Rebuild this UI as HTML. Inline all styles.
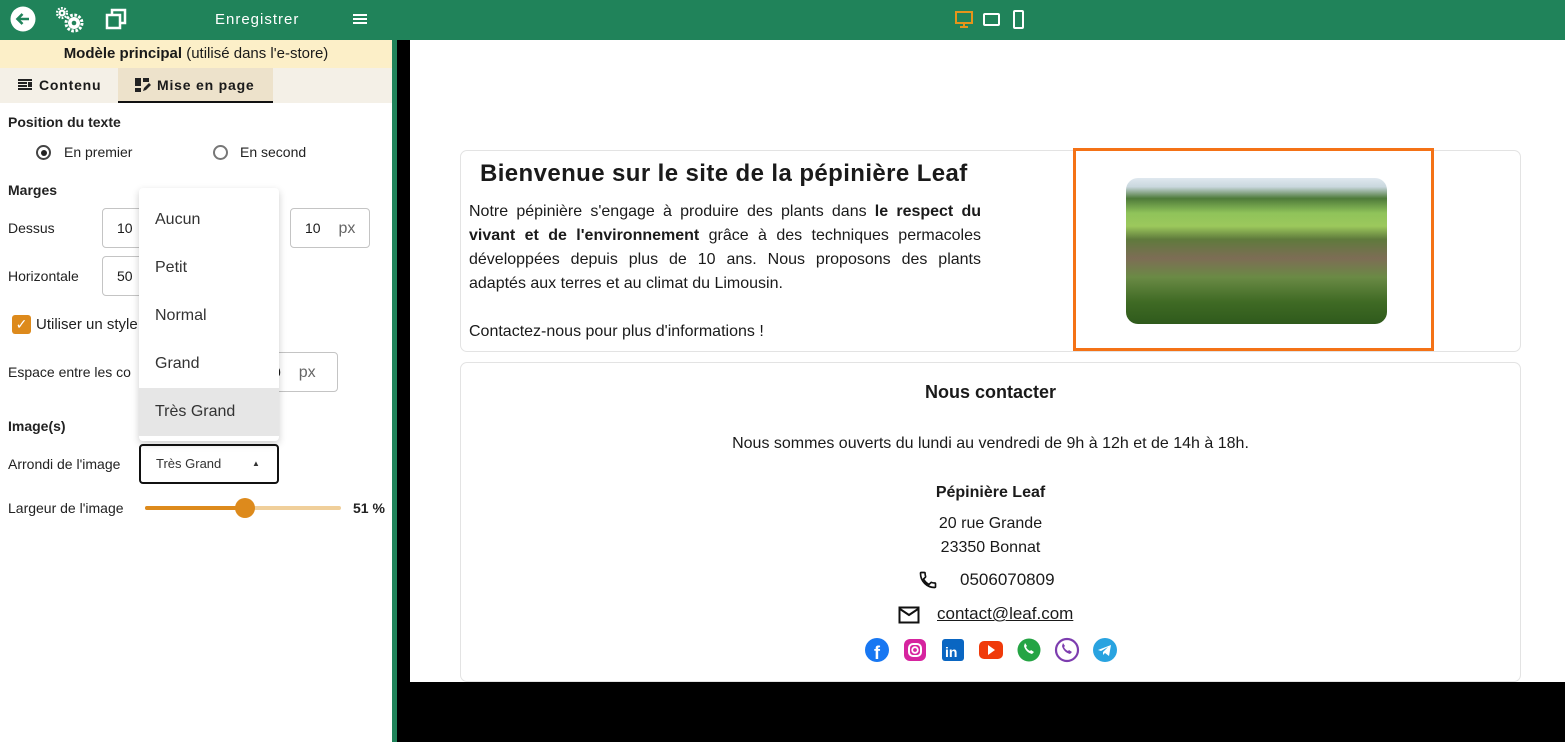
<!DOCTYPE html>
<html><head><meta charset="utf-8"><style>
*{box-sizing:border-box;margin:0;padding:0}
body{width:1565px;height:742px;overflow:hidden;font-family:"Liberation Sans",sans-serif;color:#1a1a1a;background:#000;position:relative}
.abs{position:absolute}
.top{left:0;top:0;width:1565px;height:40px;background:#20835a}
.left{left:0;top:40px;width:392px;height:702px;background:#fff}
.strip{left:392px;top:40px;width:5px;height:702px;background:#20835a}
.prev{left:410px;top:40px;width:1155px;height:642px;background:#fff}
.lbl{font-size:14px;color:#222}
.b{font-weight:bold}
.inp{border:1px solid #c4c4c4;border-radius:4px;background:#fff;font-size:14px;padding-left:14px;line-height:38px;height:40px}
.card{border:1px solid #e3e3e3;border-radius:7px;background:#fff}
.p{font-size:16px;line-height:24px}
.menu div{height:48px;line-height:48px;padding-left:16px;font-size:16px;color:#333}
</style></head><body>
<div class="abs top"></div>
<svg class="abs" style="left:10px;top:6px" width="26" height="26" viewBox="0 0 26 26"><circle cx="13" cy="13" r="12.5" fill="#fff"/><path d="M19 13H8M12.5 8L7.5 13l5 5" stroke="#20835a" stroke-width="2.6" fill="none"/></svg>
<svg class="abs" style="left:55px;top:7px" width="30" height="26" viewBox="0 0 30 26"><circle cx="7" cy="6" r="3.5" fill="#fff"/><circle cx="7" cy="6" r="5" fill="none" stroke="#fff" stroke-width="2.2" stroke-dasharray="1.8 1.4"/><circle cx="7" cy="6" r="1.3" fill="#20835a"/><circle cx="19" cy="16" r="6" fill="#fff"/><circle cx="19" cy="16" r="8" fill="none" stroke="#fff" stroke-width="3" stroke-dasharray="2.6 1.6"/><circle cx="19" cy="16" r="2.3" fill="#20835a"/></svg>
<svg class="abs" style="left:105px;top:8px" width="22" height="22" viewBox="0 0 22 22"><rect x="7" y="2" width="13" height="13" fill="none" stroke="#fff" stroke-width="2.5"/><rect x="2" y="7" width="13" height="13" fill="#20835a" stroke="#fff" stroke-width="2.5"/></svg>
<div class="abs" style="left:215px;top:11px;color:#fff;font-size:15px;letter-spacing:1px">Enregistrer</div>
<div class="abs" style="left:353px;top:14px;width:14px;height:2px;background:#fff;box-shadow:0 4px 0 #fff,0 8px 0 #fff"></div>
<svg class="abs" style="left:954px;top:11px" width="20" height="18" viewBox="0 0 20 18"><rect x="2" y="1" width="16" height="11" fill="none" stroke="#e6941a" stroke-width="2"/><path d="M10 12v3M6 16h8" stroke="#e6941a" stroke-width="2"/></svg>
<div class="abs" style="left:983px;top:13px;width:17px;height:13px;border:2.5px solid #fff;border-radius:2px"></div>
<div class="abs" style="left:1013px;top:10px;width:11px;height:19px;border:2.5px solid #fff;border-radius:2px"></div>

<div class="abs left"></div>
<div class="abs" style="left:0;top:40px;width:392px;height:28px;background:#fcefc8;text-align:center;font-size:15px;line-height:28px"><b>Modèle principal</b> (utilisé dans l'e-store)</div>
<div class="abs" style="left:0;top:68px;width:392px;height:35px;background:#f4f0e7"></div>
<div class="abs" style="left:118px;top:68px;width:155px;height:35px;background:#ede2cb;border-bottom:2px solid #111"></div>
<svg class="abs" style="left:17px;top:78px" width="16" height="14" viewBox="0 0 16 14"><path d="M1 2h14M1 5h9M1 8h9M1 11h14" stroke="#222" stroke-width="2"/><rect x="11" y="4" width="4" height="5" fill="#222"/></svg>
<div class="abs b" style="left:39px;top:77px;font-size:14px;letter-spacing:.8px">Contenu</div>
<svg class="abs" style="left:134px;top:77px" width="18" height="16" viewBox="0 0 18 16"><rect x="1" y="1" width="6" height="8" fill="#222"/><rect x="9" y="1" width="6" height="4" fill="#222"/><rect x="1" y="11" width="6" height="4" fill="#222"/><path d="M9 14l1-3 5-5 2 2-5 5z" fill="#222"/></svg>
<div class="abs b" style="left:157px;top:77px;font-size:14px;letter-spacing:.8px">Mise en page</div>
<div class="abs lbl b" style="left:8px;top:114px">Position du texte</div>
<div class="abs" style="left:36px;top:145px;width:15px;height:15px;border:2px solid #444;border-radius:50%"><div style="margin:2.5px;width:6px;height:6px;border-radius:50%;background:#222"></div></div>
<div class="abs lbl" style="left:64px;top:144px">En premier</div>
<div class="abs" style="left:213px;top:145px;width:15px;height:15px;border:2px solid #777;border-radius:50%"></div>
<div class="abs lbl" style="left:240px;top:144px">En second</div>
<div class="abs lbl b" style="left:8px;top:182px">Marges</div>
<div class="abs lbl" style="left:8px;top:220px">Dessus</div>
<div class="abs inp" style="left:102px;top:208px;width:50px">10</div>
<div class="abs inp" style="left:290px;top:208px;width:80px">10 <span style="color:#666;font-size:16px;margin-left:14px">px</span></div>
<div class="abs lbl" style="left:8px;top:268px">Horizontale</div>
<div class="abs inp" style="left:102px;top:256px;width:50px">50</div>
<div class="abs" style="left:12px;top:315px;width:19px;height:19px;background:#dd8a1c;border-radius:3px;color:#fff;font-size:14px;text-align:center;line-height:19px">✓</div>
<div class="abs lbl" style="left:36px;top:316px;font-size:15px">Utiliser un style</div>
<div class="abs lbl" style="left:8px;top:364px">Espace entre les co</div>
<div class="abs inp" style="left:258px;top:352px;width:80px">0 <span style="color:#666;font-size:16px;margin-left:14px">px</span></div>
<div class="abs lbl b" style="left:8px;top:418px">Image(s)</div>
<div class="abs lbl" style="left:8px;top:456px">Arrondi de l'image</div>
<div class="abs" style="left:139px;top:444px;width:140px;height:40px;border:2px solid #111;border-radius:4px;font-size:13px;line-height:36px;padding-left:15px;color:#333">Très Grand<span style="position:absolute;left:111px;font-size:8px">▲</span></div>
<div class="abs lbl" style="left:8px;top:500px">Largeur de l'image</div>
<div class="abs" style="left:145px;top:506px;width:196px;height:4px;background:#f0cf9a;border-radius:2px"></div>
<div class="abs" style="left:145px;top:506px;width:100px;height:4px;background:#dd8a1c;border-radius:2px"></div>
<div class="abs" style="left:235px;top:498px;width:20px;height:20px;background:#dd8a1c;border-radius:50%"></div>
<div class="abs lbl b" style="left:353px;top:500px">51 %</div>
<div class="abs menu" style="left:139px;top:188px;width:140px;height:253px;background:#fff;border-radius:4px;box-shadow:0 3px 8px rgba(0,0,0,.2);padding-top:8px">
<div>Aucun</div><div>Petit</div><div>Normal</div><div>Grand</div><div style="background:#e6e6e6">Très Grand</div></div>

<div class="abs strip"></div>
<div class="abs prev"></div>
<div class="abs card" style="left:460px;top:150px;width:1061px;height:202px"></div>
<div class="abs b" style="left:480px;top:160px;font-size:24px;letter-spacing:.4px">Bienvenue sur le site de la pépinière Leaf</div>
<div class="abs p" style="left:469px;top:200px;width:512px;text-align:justify">Notre pépinière s'engage à produire des plants dans <b>le respect du vivant et de l'environnement</b> grâce à des techniques permacoles développées depuis plus de 10 ans. Nous proposons des plants adaptés aux terres et au climat du Limousin.<br><br>Contactez-nous pour plus d'informations !</div>
<div class="abs" style="left:1073px;top:148px;width:361px;height:203px;border:3px solid #f47216"></div>
<div class="abs" style="left:1126px;top:178px;width:261px;height:146px;border-radius:12px;overflow:hidden;background:linear-gradient(180deg,#dfe8ef 0%,#c9d7de 6%,#4e7a3a 14%,#8fc35a 24%,#9cc85c 33%,#5f7a3c 42%,#7d6d55 55%,#6a8a45 68%,#3f6a24 85%,#2f5a1c 100%)"></div>

<div class="abs card" style="left:460px;top:362px;width:1061px;height:320px"></div>
<div class="abs b" style="left:460px;top:382px;width:1061px;text-align:center;font-size:18px">Nous contacter</div>
<div class="abs p" style="left:460px;top:432px;width:1061px;text-align:center">Nous sommes ouverts du lundi au vendredi de 9h à 12h et de 14h à 18h.</div>
<div class="abs p b" style="left:460px;top:481px;width:1061px;text-align:center">Pépinière Leaf</div>
<div class="abs p" style="left:460px;top:512px;width:1061px;text-align:center">20 rue Grande<br>23350 Bonnat</div>
<svg class="abs" style="left:918px;top:570px" width="20" height="20" viewBox="0 0 24 24"><path d="M6.6 10.8c1.4 2.8 3.8 5.1 6.6 6.6l2.2-2.2c.3-.3.7-.4 1-.2 1.1.4 2.3.6 3.6.6.6 0 1 .4 1 1V20c0 .6-.4 1-1 1C10.6 21 3 13.4 3 4c0-.6.4-1 1-1h3.5c.6 0 1 .4 1 1 0 1.3.2 2.5.6 3.6.1.3 0 .7-.2 1z" fill="none" stroke="#111" stroke-width="2"/></svg>
<div class="abs p" style="left:960px;top:568px;font-size:17px">0506070809</div>
<svg class="abs" style="left:898px;top:606px" width="22" height="18" viewBox="0 0 22 18"><rect x="1.5" y="1.5" width="19" height="15" fill="none" stroke="#111" stroke-width="2"/><path d="M2 3l9 6 9-6" fill="none" stroke="#111" stroke-width="2"/></svg>
<div class="abs p" style="left:937px;top:602px;text-decoration:underline;font-size:17px">contact@leaf.com</div>
<svg class="abs" style="left:864px;top:637px" width="256" height="28" viewBox="0 0 256 28">
<circle cx="13" cy="13" r="12" fill="#1877f2"/><text x="10" y="22" fill="#fff" font-size="18" font-weight="bold" font-family="Liberation Sans">f</text>
<rect x="40" y="2" width="22" height="22" rx="6" fill="#d6249f"/><rect x="45" y="7" width="12" height="12" rx="4" fill="none" stroke="#fff" stroke-width="2"/><circle cx="51" cy="13" r="2.8" fill="none" stroke="#fff" stroke-width="1.8"/>
<rect x="78" y="2" width="22" height="22" rx="3" fill="#0a66c2"/><text x="81" y="20" fill="#fff" font-size="14" font-weight="bold" font-family="Liberation Sans">in</text>
<rect x="115" y="4" width="24" height="18" rx="5" fill="#f03a0a"/><path d="M124 8l7 5-7 5z" fill="#fff"/>
<circle cx="165" cy="13" r="11.5" fill="#25a444"/><path d="M160 9c1 4 4 7 8 8l2-2-3-2-1 1c-2-1-3-2-4-4l1-1-2-3z" fill="#fff"/>
<circle cx="203" cy="13" r="11" fill="#fff" stroke="#7d3daf" stroke-width="2.2"/><path d="M198 9c1 4 4 7 8 8l2-2-3-2-1 1c-2-1-3-2-4-4l1-1-2-3z" fill="#7d3daf"/>
<circle cx="241" cy="13" r="12" fill="#29a3e0"/><path d="M234 13l13-5-2 11-4-3-2 2v-3l5-5-7 4z" fill="#fff"/>
</svg>
</body></html>
